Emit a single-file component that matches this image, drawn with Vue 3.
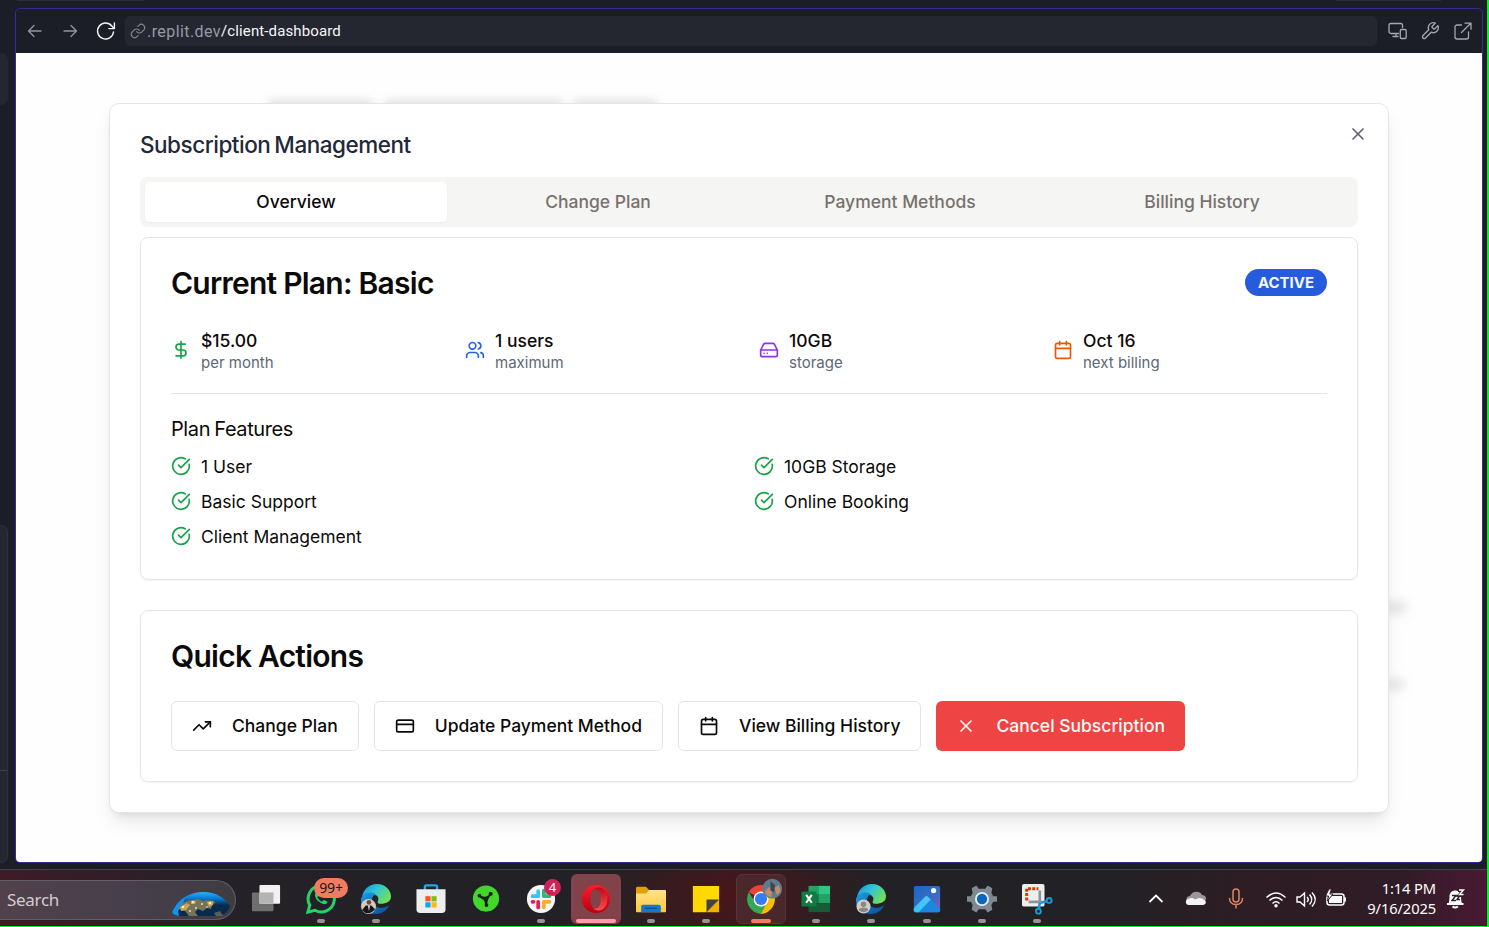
<script setup>
const tabs = ['Overview', 'Change Plan', 'Payment Methods', 'Billing History']

const icons = {
  dollar: '<path d="M12 2v20"/><path d="M17 5H9.5a3.5 3.5 0 0 0 0 7h5a3.5 3.5 0 0 1 0 7H6"/>',
  users: '<path d="M16 21v-2a4 4 0 0 0-4-4H6a4 4 0 0 0-4 4v2"/><circle cx="9" cy="7" r="4"/><path d="M22 21v-2a4 4 0 0 0-3-3.87"/><path d="M16 3.13a4 4 0 0 1 0 7.75"/>',
  drive: '<path d="M22 12H2"/><path d="M5.45 5.11 2 12v6a2 2 0 0 0 2 2h16a2 2 0 0 0 2-2v-6l-3.45-6.89A2 2 0 0 0 16.76 4H7.24a2 2 0 0 0-1.79 1.11z"/><path d="M6 16h.01"/><path d="M10 16h.01"/>',
  calendar: '<path d="M8 2v4"/><path d="M16 2v4"/><rect width="18" height="18" x="3" y="4" rx="2"/><path d="M3 10h18"/>',
  check: '<path d="M21.801 10A10 10 0 1 1 17 3.335"/><path d="m9 11 3 3L22 4"/>',
  trend: '<path d="M22 7 13.5 15.5 8.5 10.5 2 17"/><path d="M16 7h6v6"/>',
  card: '<rect width="20" height="14" x="2" y="5" rx="2"/><path d="M2 10h20"/>',
  close: '<path d="M18 6 6 18"/><path d="m6 6 12 12"/>',
}

const stats = [
  { icon: 'dollar', tone: 'green', value: '$15.00', label: 'per month' },
  { icon: 'users', tone: 'blue', value: '1 users', label: 'maximum' },
  { icon: 'drive', tone: 'purple', value: '10GB', label: 'storage' },
  { icon: 'calendar', tone: 'orange', value: 'Oct 16', label: 'next billing' },
]

const features = ['1 User', '10GB Storage', 'Basic Support', 'Online Booking', 'Client Management']

const actions = [
  { icon: 'trend', label: 'Change Plan' },
  { icon: 'card', label: 'Update Payment Method' },
  { icon: 'calendar', label: 'View Billing History' },
  { icon: 'close', label: 'Cancel Subscription', danger: true },
]
</script>

<template>
  <div class="screen">
    <div class="workspace">
      <div class="side">
        <div class="side-top"></div>
        <div class="side-bottom"><i></i></div>
      </div>
      <div class="main">
        <div class="tab-edges"><i class="edge-a"></i><i class="edge-b"></i></div>
        <div class="browser">
          <div class="toolbar">
            <svg class="nav dim" viewBox="0 0 20 20"><path d="M16 10H4M9 4.500 3.500 10l5.500 5.500" /></svg>
            <svg class="nav dim" viewBox="0 0 20 20"><path d="M4 10h12.500M11 4.500l5.500 5.500-5.500 5.500" /></svg>
            <svg class="nav reload" viewBox="0 0 20 20"><path d="M18.500 11A8 8 0 1 1 16.800 5L19.200 7.500M19.400 2v5.600h-5.600" /></svg>
            <div class="address">
              <svg class="link" viewBox="0 0 24 24"><path d="M10 13a5 5 0 0 0 7.540.54l3-3a5 5 0 0 0-7.070-7.070l-1.720 1.710" /><path d="M14 11a5 5 0 0 0-7.540-.54l-3 3a5 5 0 0 0 7.070 7.070l1.710-1.710" /></svg>
              <span class="host">.replit.dev</span><span class="path">/client-dashboard</span>
            </div>
            <div class="tools">
              <svg viewBox="0 0 20 20"><path d="M11.500 12.500H4A2 2 0 0 1 2 10.500V4A1.500 1.500 0 0 1 3.500 2.500H14A1.500 1.500 0 0 1 15.500 4V6.500M9 12.500V15.500M6 15.500H11M14.500 8.500H18A1.200 1.200 0 0 1 19.200 9.700V16.300A1.200 1.200 0 0 1 18 17.500H14.500A1.200 1.200 0 0 1 13.300 16.300V9.700A1.200 1.200 0 0 1 14.500 8.500Z" /></svg>
              <svg viewBox="0 0 24 24" class="wrench"><path d="M14.700 6.300a1 1 0 0 0 0 1.400l1.600 1.600a1 1 0 0 0 1.400 0l3.770-3.770a6 6 0 0 1-7.940 7.940l-6.910 6.910a2.120 2.120 0 0 1-3-3l6.910-6.910a6 6 0 0 1 7.940-7.940l-3.760 3.760z" /></svg>
              <svg viewBox="0 0 20 20"><path d="M8.500 4H4A2 2 0 0 0 2 6V16A2 2 0 0 0 4 18H13.500A2 2 0 0 0 15.500 16V11M8.500 11.500 17.500 2.500M12 2.200H18V8.200" /></svg>
            </div>
          </div>

          <div class="page">
            <div class="ghost ghost-title"><i></i><i></i><i></i></div>
            <div class="ghost ghost-a"></div>
            <div class="ghost ghost-b"></div>
            <section class="dialog">
              <button class="close" aria-label="Close"><svg class="icon" viewBox="0 0 24 24" v-html="icons.close"></svg></button>
              <h2>Subscription Management</h2>
              <nav class="tabs">
                <button v-for="(tab, i) in tabs" :key="tab" :class="{ active: i === 0 }">{{ tab }}</button>
              </nav>

              <article class="card plan">
                <header>
                  <h3>Current Plan: Basic</h3>
                  <span class="badge">ACTIVE</span>
                </header>
                <div class="stats">
                  <div v-for="s in stats" :key="s.label" class="stat">
                    <svg class="icon" :class="s.tone" viewBox="0 0 24 24" v-html="icons[s.icon]"></svg>
                    <div>
                      <p class="value">{{ s.value }}</p>
                      <p class="label">{{ s.label }}</p>
                    </div>
                  </div>
                </div>
                <hr />
                <h4>Plan Features</h4>
                <ul>
                  <li v-for="f in features" :key="f">
                    <svg class="icon green" viewBox="0 0 24 24" v-html="icons.check"></svg>
                    <span>{{ f }}</span>
                  </li>
                </ul>
              </article>

              <article class="card quick">
                <h3>Quick Actions</h3>
                <div class="actions">
                  <button v-for="a in actions" :key="a.label" :class="{ danger: a.danger }">
                    <svg class="icon" viewBox="0 0 24 24" v-html="icons[a.icon]"></svg>
                    <span>{{ a.label }}</span>
                  </button>
                </div>
              </article>
            </section>
          </div>
        </div>
      </div>
    </div>

    <footer class="taskbar">
      <svg width="0" height="0" class="defs">
        <defs>
          <linearGradient id="edgeTop" x1="0" y1="0" x2="1" y2=".5"><stop offset="0" stop-color="#1a8fe0" /><stop offset=".5" stop-color="#2fc3d8" /><stop offset="1" stop-color="#6fe05a" /></linearGradient>
          <linearGradient id="edgeLow" x1="0" y1="0" x2="1" y2="1"><stop offset="0" stop-color="#1b9de8" /><stop offset="1" stop-color="#0b4a94" /></linearGradient>
          <linearGradient id="opera" x1="0" y1="0" x2="0" y2="1"><stop offset="0" stop-color="#ff1b2d" /><stop offset="1" stop-color="#b8000f" /></linearGradient>
          <linearGradient id="operaSide" x1="0" y1="0" x2="0" y2="1"><stop offset="0" stop-color="#b4101c" /><stop offset="1" stop-color="#ff4b4b" /></linearGradient>
          <linearGradient id="folder" x1="0" y1="0" x2="0" y2="1"><stop offset="0" stop-color="#ffe38a" /><stop offset="1" stop-color="#ffc83d" /></linearGradient>
          <linearGradient id="photo" x1="0" y1="0" x2="1" y2="1"><stop offset="0" stop-color="#1768c4" /><stop offset=".6" stop-color="#3c6cc4" /><stop offset="1" stop-color="#9157b4" /></linearGradient>
          <linearGradient id="hill" x1="0" y1="1" x2="1" y2="0"><stop offset="0" stop-color="#35c3f5" /><stop offset="1" stop-color="#52c8f8" /></linearGradient>
          <linearGradient id="earth" x1="0" y1="0" x2="0" y2="1"><stop offset="0" stop-color="#2aaeff" /><stop offset=".25" stop-color="#087fd8" /><stop offset=".55" stop-color="#062b4c" /></linearGradient>
        </defs>
      </svg>

      <div class="search">
        <span>Search</span>
        <svg class="globe" viewBox="0 0 60 26">
          <path d="M1 21C8 7 19 1 32 1S54 7 59 15C57 21 53 24 48 25H7Q2 24 1 21Z" fill="url(#earth)" />
          <path d="M1 21C5 13 9 9 14 6L12 14 7 20 8 25Q2 24 1 21Z" fill="#1792e8" />
          <path d="M8 18C10 12 16 9 22 9L27 8 32 10 37 9 43 10 44 12 41 14 40 18 36 17 32 20 27 18 24 21 27 25H18L14 20Z" fill="#77745a" />
          <path d="M9 16 16 12 19 14 15 19 10 20ZM36 11 42 10 42 14 38 16ZM20 10 25 10 24 13 20 13Z" fill="#c9a657" />
          <g fill="#ffeeb8"><circle cx="12" cy="16" r="1.300" /><circle cx="22" cy="11" r="1.300" /><circle cx="25" cy="17" r=".9" /><circle cx="19" cy="20" r=".9" /><circle cx="31" cy="13" r=".9" /><circle cx="39" cy="12" r="1.300" /><circle cx="36" cy="16" r=".8" /></g>
          <path d="M43 22 49 20 52 25H45Z" fill="#5b6152" />
        </svg>
      </div>

      <div class="apps">
        <div class="app">
          <svg viewBox="0 0 32 32"><rect x="1" y="9" width="23" height="20" rx="1" fill="#6f6f70" /><rect x="9" y="1" width="22" height="20" rx="1" fill="#f2f2f2" /><rect x="9" y="9" width="15" height="12" fill="#b4b4b4" /></svg>
        </div>
        <div class="app run">
          <svg viewBox="0 0 32 32"><path d="M2 30 4 22.500A14 14 0 1 1 9.500 28Z" fill="none" stroke="#25d366" stroke-width="3.200" /><path d="M11 9c-3 2-1 7 3 10s8 4 9 0l-4-2-2 2q-3-1-5-5l2-2Z" fill="#25d366" /></svg>
          <span class="count">99+</span>
        </div>
        <div class="app run">
          <svg viewBox="0 0 32 32"><path d="M1 19C0 7 8 0 17 0s15 7 15 13c0 6-5 8-11 8-3 0-4-1-3-3 2-3-1-7-6-7C7 11 3 14 1 19Z" fill="url(#edgeTop)" /><path d="M0 16C2 9 11 7 16 11c-5 1-6 9 0 13 4 3 10 1 14-1-3 6-8 9-14 9C6 32-1 24 0 16Z" fill="url(#edgeLow)" /><circle cx="8" cy="24" r="8" fill="#d8c9bc" /><path d="M1 28 5 23h6l4 4q-7 8-14 1Z" fill="#15171c" /><circle cx="8.500" cy="19.500" r="2.500" fill="#6d4a3b" /><path d="m7.500 23 1 6 1-6" fill="#fff" /></svg>
        </div>
        <div class="app">
          <svg viewBox="0 0 32 32"><path d="M9.500 7V3Q9.500 1.500 11 1.500h10Q22.500 1.500 22.500 3V7" fill="none" stroke="#25a5ea" stroke-width="2.500" /><path d="M.5 5.500h31v21.500q0 4-4 4h-23q-4 0-4-4Z" fill="#eee" /><path fill="#f35325" d="M10 13h5.500v5.500H10z" /><path fill="#81bc06" d="M16.500 13H22v5.500h-5.500z" /><path fill="#05a6f0" d="M10 19.500h5.500V25H10z" /><path fill="#ffba08" d="M16.500 19.500H22V25h-5.500z" /></svg>
        </div>
        <div class="app">
          <svg viewBox="0 0 32 32"><circle cx="16" cy="15.500" r="14" fill="#44d62c" /><path d="M8.500 11.500Q13 14 15 13.500 19 13 20 9.500L21.500 11 18.500 16Q17 19 17.500 23H15Q15.500 19 13.500 17 10.500 15 8.500 13.500Z" fill="#122112" /><circle cx="21" cy="10.500" r="2.200" fill="#122112" /><circle cx="9" cy="12.500" r="2" fill="#122112" /><circle cx="16.500" cy="22.500" r="2" fill="#122112" /></svg>
        </div>
        <div class="app run">
          <svg viewBox="0 0 32 32"><circle cx="16" cy="16" r="15" fill="#f7f7f7" /><g stroke-width="4" stroke-linecap="round"><path d="M13 7.500v5M7 13h6" stroke="#36c5f0" /><path d="M19 7V13M19 13h6" stroke="#2eb67d" /><path d="M19 19h6M19 19v6" stroke="#ecb22e" /><path d="M13 19v6M7 19h1" stroke="#e01e5a" /></g></svg>
          <span class="slack-count">4</span>
        </div>
        <div class="app open opera">
          <svg viewBox="0 0 32 32"><path fill-rule="evenodd" d="M16 1a15 15 0 1 1 0 30 15 15 0 0 1 0-30ZM15.500 5.500c-4 0-5.500 5-5.500 10.500s2 10.500 5.500 10.500S21 21.500 21 16 19 5.500 15.500 5.500Z" fill="url(#opera)" /><path d="M12.500 6.500C16 3 21 3 24 5.500 29.500 10 29.500 22 24 26.500 21 29 16 29 12.500 25.500 19 28 21 22 21 16S19 4 12.500 6.500Z" fill="url(#operaSide)" /></svg>
        </div>
        <div class="app run">
          <svg viewBox="0 0 32 32"><path d="M0 9V4.500Q0 3 1.500 3H10.500l3.500 3.500V14H0Z" fill="#dfa10a" /><path d="M0 10h11l3-3.500h17q1 0 1 1V29q0 1-1 1H1q-1 0-1-1Z" fill="url(#folder)" /><path d="M5.500 30v-6q0-2 2-2h17q2 0 2 2v6Z" fill="#1279cf" /><path d="M9.500 26h13" stroke="#0a4d8d" stroke-width="1.200" /></svg>
        </div>
        <div class="app run">
          <svg viewBox="0 0 32 32"><path d="M2 2h28v14.500L16.500 30H2Z" fill="#ffd900" /><path d="M16.500 16.500H30L16.500 30Z" fill="#424242" /><path d="M30 16.500V30H16.500Z" fill="#edb100" /></svg>
        </div>
        <div class="app open chrome">
          <svg viewBox="0 0 32 32"><path d="M16 16 3 8.500a15 15 0 0 1 26 0Z" fill="#ea4335" /><path d="M16 16V32A16 16 0 0 0 29 8.500H16Z" fill="#fbbc05" /><path d="M3 8.500A16 16 0 0 0 16 32l6.500-12.500H9.500Z" fill="#34a853" /><circle cx="16" cy="16" r="8" fill="#fff" /><circle cx="16" cy="16" r="6.500" fill="#367bf0" /><circle cx="28" cy="5" r="10.500" fill="#627b8c" /><path d="M20 8 25 3 28 7 27 14Q21 13 20 8ZM30 4 35 1 37 8 33 12Z" fill="#c18b6c" /><path d="M26-3 31 1 30 9 26 7Z" fill="#3b4656" /></svg>
        </div>
        <div class="app run">
          <svg viewBox="0 0 32 32"><path d="M8 2h12v9.500H8Z" fill="#21a366" /><path d="M19 2h12v9.500H19Z" fill="#33c481" /><path d="M8 11h12v9.500H8Z" fill="#107c41" /><path d="M19 11h12v9.500H19Z" fill="#21a366" /><path d="M8 20.500h23V30H8Z" fill="#185c37" /><rect x=".5" y="8" width="16" height="16" rx="1" fill="#107c41" /><path d="m5.500 11.500 6 8.500M11.500 11.500l-6 8.500" stroke="#fff" stroke-width="2.200" /></svg>
        </div>
        <div class="app run">
          <svg viewBox="0 0 32 32"><path d="M1 19C0 7 8 0 17 0s15 7 15 13c0 6-5 8-11 8-3 0-4-1-3-3 2-3-1-7-6-7C7 11 3 14 1 19Z" fill="url(#edgeTop)" /><path d="M0 16C2 9 11 7 16 11c-5 1-6 9 0 13 4 3 10 1 14-1-3 6-8 9-14 9C6 32-1 24 0 16Z" fill="url(#edgeLow)" /><circle cx="8" cy="24" r="7.500" fill="#d0cecb" /><circle cx="8" cy="21.500" r="2.900" fill="#8b8782" /><path d="M3 28q0-3 5-3t5 3q-5 4-10 0Z" fill="#8b8782" /></svg>
        </div>
        <div class="app run">
          <svg viewBox="0 0 32 32"><rect x="2" y="2" width="28" height="28" rx="2" fill="url(#photo)" /><path d="M2 27 14 13.500q1.500-1.500 3 0L30 26.500v1.500q0 2-2 2H4q-2 0-2-2Z" fill="#1c87df" /><path d="M2 25.500 14 13.500q1.500-1.500 3 0l3 3L7 30H4q-2 0-2-2Z" fill="url(#hill)" /><circle cx="23" cy="7" r="2.800" fill="#fff" /></svg>
        </div>
        <div class="app run">
          <svg viewBox="0 0 32 32"><path d="m10 1.500 2.500 3.500h7L22 1.500l5 3-1 5 2 3.500h4v6h-4l-2 3.500 1 5-5 3-2.500-3.500h-7L10 30.500l-5-3 1-5L4 19H0v-6h4l2-3.500-1-5Z" fill="#7f8991" /><circle cx="16" cy="16" r="7.500" fill="#e9edf0" /><circle cx="16" cy="16" r="5.500" fill="#0868bd" /></svg>
        </div>
        <div class="app run">
          <svg viewBox="0 0 32 32"><rect x="0" y="0" width="24" height="24" rx="2" fill="#eee" /><path d="M5 17.500V5H17.500" fill="none" stroke="#d83b01" stroke-width="3.200" stroke-dasharray="3.200 1.400" /><path d="M19 7v14M7 19h14" stroke="#8b9499" stroke-width="2.800" /><path d="m20 20 6-1.500M19 20l-1 6" stroke="#199bd8" stroke-width="2.800" /><circle cx="29" cy="17.500" r="2.600" fill="none" stroke="#199bd8" stroke-width="2" /><circle cx="17.500" cy="29" r="2.600" fill="none" stroke="#199bd8" stroke-width="2" /></svg>
        </div>
      </div>

      <div class="tray">
        <svg class="wide" viewBox="0 0 40 24"><path d="m13.500 15 6.500-6.500 6.500 6.500" fill="none" stroke="#fff" stroke-width="1.800" /></svg>
        <svg class="wide" viewBox="0 0 40 24"><path d="M13 16C9 14 10 9 14 9 16 3.500 24 3.500 26 8 30 8 31 12 29 14Z" fill="#9b9797" /><path d="M13 18C9 18 9 12.500 12 12 15 10.500 17 11 19 12.500L23 11Q27 11 28 13C31 14 30 18 27 18Z" fill="#f4f4f4" /></svg>
        <svg class="wide" viewBox="0 0 40 24"><g fill="none" stroke="#dd855f" stroke-width="1.500"><rect x="17" y="2" width="6" height="13" rx="3" /><path d="M13.500 11Q13.500 17.500 20 17.500T26.500 11M20 17.500v4" /></g></svg>
        <div class="status">
          <svg viewBox="0 0 30 24"><g fill="none" stroke="#fff" stroke-width="1.500"><path d="M5.500 9.500Q15 .5 24.500 9.500M8.500 12.500Q15 6.500 21.500 12.500M11.500 15.500Q15 12 18.500 15.500" /></g><circle cx="15" cy="17.700" r="1.700" fill="#fff" /></svg>
          <svg viewBox="0 0 30 24"><g fill="none" stroke="#fff" stroke-width="1.400"><path d="M6 9h3L13.500 5v13L9 14H6ZM16 9q2.500 2.500 0 5M18.500 6.500q4.500 5 0 10M21 4.500q6.500 7 0 14" /></g></svg>
          <svg viewBox="0 0 30 24"><rect x="6" y="6" width="17" height="11" rx="2.500" fill="none" stroke="#fff" stroke-width="1.500" /><rect x="8" y="8" width="13" height="7" fill="#fff" /><path d="M24 9.500v4" stroke="#fff" stroke-width="2" /><path d="M8 1 4.500 8H7.500L6.500 13 12 6H8.800L10.500 1Z" fill="#fff" stroke="#2e1d24" /></svg>
        </div>
        <div class="clock"><span>1:14 PM</span><span>9/16/2025</span></div>
        <svg class="bell" viewBox="0 0 20 24"><path d="M2.500 16.500Q3.500 14.500 3.500 9.500C3.500 1.500 15 1.500 15 9.500Q15 14.500 16 16.500Z" fill="#fff" /><path d="M1 17h16.500M6.500 19.500q2.700 2 5.400 0" stroke="#fff" stroke-width="2" fill="none" /><path d="M6 8.500h4L6 13.500h4M11 8.500h3L11 12.500h3" stroke="#2e1d24" stroke-width="1.400" fill="none" /><path d="M12 3.500h5l-4 5h4.500" stroke="#2e1d24" stroke-width="3" fill="none" /><path d="M13 3h4.500l-4 4.500h4" stroke="#fff" stroke-width="1.400" fill="none" /></svg>
      </div>
    </footer>
  </div>
</template>

<style>
body { margin: 0; background: #1b1d27; }
</style>

<style scoped>
* { box-sizing: border-box; }
h2, h3, h4, p, ul { margin: 0; padding: 0; }
button { font: inherit; margin: 0; border: 0; background: none; }
.screen {
  width: 1489px; height: 927px; overflow: hidden; display: flex; flex-direction: column;
  border-right: 2px solid #00f52e; border-bottom: 1px solid #00f52e;
  background: #1b1d27; font-family: Inter, "Liberation Sans", sans-serif; color: #0c0a09;
}
.workspace { height: 869px; display: flex; }
.side { width: 15px; display: flex; flex-direction: column; padding-top: 53px; }
.side-top { width: 8px; height: 52px; background: #242730; border-radius: 0 7px 7px 0; }
.side-bottom {
  width: 8px; height: 338px; margin-top: 420px; padding-top: 244px; background: #242730;
  border: 1px solid #2d303c; border-left: 0; border-radius: 0 7px 7px 0;
}
.side-bottom i { display: block; height: 1px; background: #3b3e4b; }
.main { width: 1468px; }
.tab-edges { height: 8px; display: flex; justify-content: space-between; padding: 0 42px 0 2px; }
.tab-edges i { height: 1px; background: #2b2e39; }
.edge-a { width: 127px; }
.edge-b { width: 105px; }
.browser {
  height: 855px; border: 1px solid #3b2a91; border-radius: 5px; overflow: hidden;
  display: flex; flex-direction: column; background: #1b1d27;
}
.toolbar { height: 44px; flex: none; display: flex; align-items: center; padding: 0 9px; }
.toolbar svg { fill: none; stroke: #a5a8b3; stroke-width: 1.3; stroke-linecap: round; stroke-linejoin: round; }
.nav { width: 20px; height: 20px; margin-right: 15px; overflow: visible; }
.toolbar .dim { stroke: #92959f; }
.toolbar .reload { stroke: #f0f1f4; margin-right: 10px; stroke-width: 1.4; }
.address {
  flex: 1; height: 30px; display: flex; align-items: center; background: #242730; border-radius: 5px;
  padding-left: 5px; font-family: Roboto, sans-serif;
}
.toolbar .link { width: 16px; height: 16px; stroke: #858894; stroke-width: 1.7; margin-right: 1px; }
.host { color: #959aa6; font-size: 16px; letter-spacing: .42px; width: 74px; }
.path { color: #f5f6f8; font-size: 15px; letter-spacing: .12px; }
.tools { display: flex; gap: 13px; margin-left: 10px; }
.tools svg { width: 20px; height: 20px; }
.toolbar .wrench { stroke-width: 1.6; }
.page { position: relative; flex: 1; background: #fefefe; padding: 50px 93px 0; }
.ghost { position: absolute; filter: blur(5px); background: #e5e5e5; }
.ghost-title { left: 253px; top: 47px; width: 388px; height: 14px; display: flex; gap: 12px; background: none; }
.ghost-title i { flex: 1; background: #e0e0e0; }
.ghost-title i:nth-child(2) { flex: 1.700; }
.ghost-title i:nth-child(3) { flex: .8; }
.ghost-a { left: 1370px; top: 548px; width: 20px; height: 13px; }
.ghost-b { left: 1370px; top: 626px; width: 18px; height: 11px; }
.dialog {
  position: relative; width: 1280px; height: 710px; padding: 26px 30px 30px; background: #fff;
  border: 1px solid #e5e5e5; border-radius: 10px;
  box-shadow: 0 12px 19px -4px rgb(0 0 0 / .1), 0 5px 8px -5px rgb(0 0 0 / .1);
}
.icon { width: 20px; height: 20px; flex: none; display: block; fill: none; stroke: currentColor; stroke-width: 2; stroke-linecap: round; stroke-linejoin: round; }
.close { position: absolute; right: 20px; top: 20px; padding: 0; color: #5b6270; }
h2 { font-size: 22.5px; line-height: 30px; font-weight: 500; letter-spacing: -.48px; word-spacing: -1.5px; color: #1f2937; }
.tabs { height: 50px; margin-top: 17px; display: grid; grid-template-columns: repeat(4, 1fr); padding: 5px; background: #f5f5f4; border-radius: 8px; }
.tabs button { font-size: 17.5px; font-weight: 500; color: #78716c; border-radius: 5px; padding: 0 0 2px; }
.tabs .active { background: #fff; color: #0c0a09; box-shadow: 0 1px 2px rgb(0 0 0 / .04); }
.card { border: 1px solid #e7e5e4; border-radius: 8px; box-shadow: 0 1px 2px rgb(0 0 0 / .05); padding: 30px; }
.plan { margin-top: 10px; height: 343px; }
.plan header { display: flex; justify-content: space-between; align-items: flex-start; height: 30px; }
h3 { font-size: 30px; line-height: 30px; font-weight: 600; letter-spacing: -.75px; }
.badge { height: 27px; margin-top: 1px; width: 82px; line-height: 27px; text-align: center; border-radius: 14px; background: #265cdc; color: #f4f8ff; font-size: 15px; font-weight: 700; }
.stats { display: grid; grid-template-columns: repeat(4, 1fr); gap: 20px; margin-top: 30px; }
.stat { display: flex; align-items: center; gap: 10px; height: 45px; }
.stat .icon, li .icon { margin: -1px 0 1px; }
.value { font-size: 17.5px; line-height: 25px; font-weight: 500; }
.label { font-size: 15px; line-height: 20px; color: #5f6775; }
hr { border: 0; height: 1px; background: #e5e5e5; margin: 20px 0; }
h4 { font-size: 20px; line-height: 30px; font-weight: 400; letter-spacing: -.4px; word-spacing: -1px; }
ul { list-style: none; display: grid; grid-template-columns: 1fr 1fr; gap: 10px; margin-top: 10px; }
li { display: flex; align-items: center; gap: 10px; height: 25px; font-size: 17.5px; }
.green { color: #16a34a; }
.blue { color: #2563eb; }
.purple { color: #9333ea; }
.orange { color: #ea580c; }
.quick { margin-top: 30px; height: 172px; }
.actions { display: flex; gap: 15px; margin-top: 30px; }
.actions button {
  height: 50px; display: flex; align-items: center; gap: 20px; padding: 0 20px; border: 1px solid #e7e5e4;
  border-radius: 6px; font-size: 17.5px; font-weight: 500; color: #0c0a09; white-space: nowrap;
}
.actions span { padding-bottom: 2px; }
.actions .danger { background: #ef4444; border: 0; color: #fafaf9; }

.taskbar {
  position: relative; height: 57px; display: flex; align-items: center; border-top: 1px solid #454247;
  font-family: "Noto Sans", "Open Sans", sans-serif; color: #fff;
  background: radial-gradient(ellipse 145px 80px at 735px 25px, #4a1519, transparent), linear-gradient(90deg, #3d1b27 0, #252128 230px, #222226 430px, #222226 1110px, #2e1d24 1250px, #301c26 1400px, #4a1934 1487px);
}
.defs { position: absolute; }
.search {
  width: 236px; height: 40px; margin: 3px 5px 0 0; border-radius: 0 20px 20px 0; border: 1px solid #625d66;
  border-left: 0; background: linear-gradient(90deg, #51414a, #463f4c 130px, #3e3c41); display: flex;
  align-items: center; justify-content: space-between; padding: 0 4px 0 7px; overflow: hidden;
}
.search span { font-size: 17px; color: #d3ccd0; letter-spacing: -.3px; }
.globe { width: 60px; height: 26px; align-self: flex-end; margin-bottom: 2px; }
.apps { display: flex; gap: 5px; padding-top: 2px; }
.app { position: relative; width: 50px; height: 50px; border-radius: 6px; display: grid; place-items: center; }
.app:nth-child(n + 13) { left: 1px; }
.app svg { width: 30px; height: 30px; overflow: visible; }
.run::after, .open::after { content: ""; position: absolute; left: 21px; bottom: 1px; width: 8px; height: 4px; border-radius: 2px; background: #969396; }
.opera { background: #824249; }
.opera::after { left: 5px; width: 40px; background: #ff9baa; }
.chrome { background: #49272a; border: 1px solid #573536; }
.chrome::after { left: 14px; bottom: 0; width: 20px; background: #f17d60; }
.count, .slack-count { position: absolute; display: grid; place-items: center; line-height: 1; }
.count { left: 18px; top: 4px; width: 34px; height: 20px; border-radius: 10px; background: #f17b60; color: #241718; font-size: 14px; letter-spacing: -.2px; }
.slack-count { left: 28px; top: 5px; width: 17px; height: 17px; border-radius: 9px; background: #cd2457; font-size: 13px; }
.tray { margin-left: auto; padding: 2px 21px 0 0; display: flex; align-items: center; }
.wide { width: 40px; height: 24px; }
.status { display: flex; margin: 2px 0 0 5px; }
.status svg { width: 30px; height: 24px; }
.clock { width: 85px; display: flex; flex-direction: column; align-items: flex-end; font-size: 14.7px; line-height: 20px; letter-spacing: -.12px; margin-top: -2px; }
.bell { width: 20px; height: 24px; margin-left: 10px; }
</style>
